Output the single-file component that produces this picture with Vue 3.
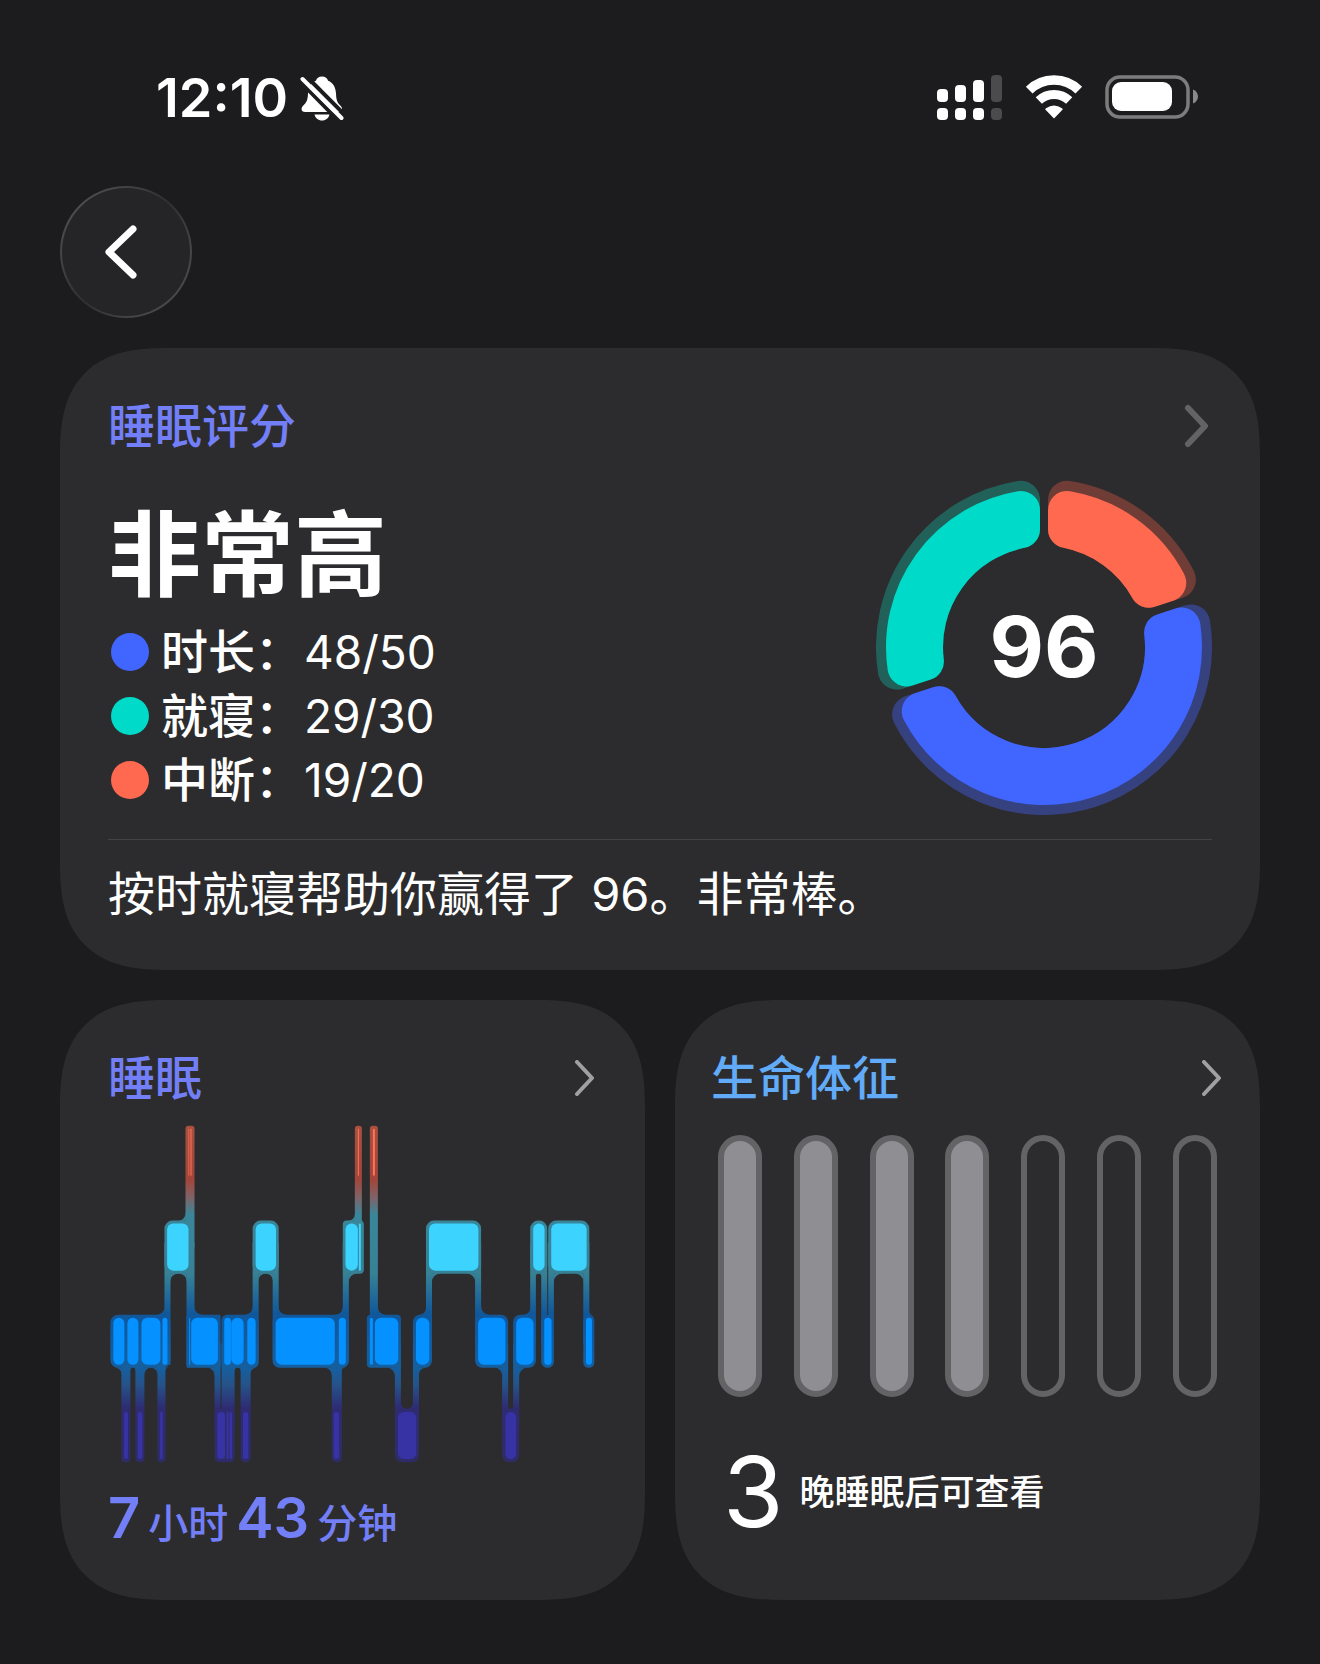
<script setup>
const scores = [
  { label: "时长：", value: "48/50", color: "#4166ff" },
  { label: "就寝：", value: "29/30", color: "#00dac8" },
  { label: "中断：", value: "19/20", color: "#ff694f" },
];

// angles in degrees, clockwise from the top
const segments = [
  { from: 0, to: 72, color: "#ff694f", dim: "#6f3c36" },
  { from: 72, to: 252, color: "#4166ff", dim: "#364280" },
  { from: 252, to: 360, color: "#00dac8", dim: "#22605a" },
];

const CORNER = 19;
const GAP = 4;

// The path is inset by CORNER, a round-joined stroke brings it back to full size.
const sector = (seg, inner, outer) => {
  const ri = inner + CORNER;
  const ro = outer - CORNER;
  const point = (r, angle, side) => {
    const a = (angle * Math.PI) / 180 + side * Math.asin((GAP + CORNER) / r);
    return `${(r * Math.sin(a)).toFixed(2)} ${(-r * Math.cos(a)).toFixed(2)}`;
  };
  const large = seg.to - seg.from > 190 ? 1 : 0;
  return [
    `M${point(ri, seg.from, 1)}`,
    `L${point(ro, seg.from, 1)}`,
    `A${ro} ${ro} 0 ${large} 1 ${point(ro, seg.to, -1)}`,
    `L${point(ri, seg.to, -1)}`,
    `A${ri} ${ri} 0 ${large} 0 ${point(ri, seg.from, 1)}Z`,
  ].join("");
};

// sleep stages: [x1, x2]
const stages = [
  { name: "awake", y: 58, color: "#ff7358", blocks: [[297, 299], [303, 306], [804, 807], [849, 855]] },
  {
    name: "rem",
    y: 342,
    color: "#3dd3ff",
    blocks: [[233, 297], [498, 559], [767, 804], [807, 813], [1017, 1165], [1329, 1363], [1383, 1489]],
  },
  {
    name: "core",
    y: 624,
    color: "#0591ff",
    blocks: [
      [72, 105], [114, 147], [156, 213], [219, 234], [299, 302], [305, 385], [404, 424], [425, 462],
      [473, 498], [558, 735], [747, 768], [840, 849], [855, 925], [978, 1018], [1164, 1246],
      [1278, 1330], [1362, 1384], [1487, 1505],
    ],
  },
  {
    name: "deep",
    y: 906,
    color: "#3833a5",
    blocks: [
      [104, 116], [145, 159], [212, 220], [383, 406], [411, 417], [420, 427], [460, 476], [732, 748],
      [924, 979], [1246, 1278],
    ],
  },
];

const radius = (block) => Math.min(18, (block[1] - block[0]) / 2);

// ribbon behind the blocks: [x1, y1, x2, y2, radius]
const ribbons = [
  // awake
  [288, 49, 315, 420, 9], [795, 49, 816, 420, 9], [840, 49, 864, 700, 9],
  // rem
  [225, 333, 310, 492, 24], [489, 333, 567, 492, 24], [759, 333, 822, 492, 12],
  [1008, 333, 1173, 492, 24], [1320, 333, 1371, 492, 24], [1374, 333, 1497, 492, 24],
  // core
  [63, 615, 243, 774, 24], [291, 615, 393, 774, 4], [396, 615, 507, 774, 16], [549, 615, 777, 774, 20],
  [831, 615, 933, 774, 12], [969, 615, 1026, 774, 22], [1155, 615, 1254, 774, 22],
  [1269, 615, 1337, 774, 22], [1353, 615, 1391, 774, 19], [1479, 615, 1512, 774, 16],
  // deep
  [96, 700, 123, 1057, 12], [138, 700, 165, 1057, 12], [204, 700, 228, 1057, 12],
  [375, 897, 435, 1057, 16], [453, 700, 483, 1057, 14], [726, 700, 756, 1057, 14],
  [915, 897, 987, 1057, 22], [1236, 897, 1287, 1057, 22],
  // links between two stages
  [225, 400, 243, 765, 0], [291, 400, 315, 765, 0], [489, 400, 507, 750, 0], [549, 400, 567, 750, 0],
  [759, 400, 777, 750, 0], [1008, 400, 1026, 700, 0], [1155, 400, 1173, 700, 0],
  [1320, 400, 1337, 700, 0], [1353, 400, 1371, 700, 0], [1374, 400, 1391, 700, 0],
  [1479, 400, 1497, 700, 0], [375, 700, 393, 950, 0], [396, 700, 435, 950, 0],
  [915, 700, 933, 950, 0], [969, 700, 987, 950, 0], [1236, 700, 1254, 950, 0], [1269, 700, 1287, 950, 0],
];

// inner corners of the ribbon: [x, y, dx, dy, radius]
const fillets = [
  [288, 333, -1, -1, 20], [795, 333, -1, -1, 18],
  [225, 615, -1, -1, 22], [315, 615, 1, -1, 22], [489, 615, -1, -1, 22], [567, 615, 1, -1, 22],
  [759, 615, -1, -1, 22], [864, 615, 1, -1, 22], [1008, 615, -1, -1, 20], [1173, 615, 1, -1, 24],
  [1320, 615, -1, -1, 20], [1497, 615, 1, -1, 10],
  [243, 492, 1, 1, 22], [291, 492, -1, 1, 22], [507, 492, 1, 1, 20], [549, 492, -1, 1, 20],
  [777, 492, 1, 1, 24], [1026, 492, 1, 1, 24], [1155, 492, -1, 1, 24], [1337, 492, 1, 1, 8],
  [1353, 492, -1, 1, 8], [1391, 492, 1, 1, 24], [1479, 492, -1, 1, 24],
  [96, 774, -1, 1, 18], [123, 774, 1, 1, 7], [138, 774, -1, 1, 7], [165, 774, 1, 1, 19],
  [204, 774, -1, 1, 19], [228, 774, 1, 1, 9], [375, 774, -1, 1, 22], [435, 774, 1, 1, 9],
  [453, 774, -1, 1, 9], [483, 774, 1, 1, 16], [726, 774, -1, 1, 22], [756, 774, 1, 1, 10],
  [915, 774, -1, 1, 24], [987, 774, 1, 1, 20], [1236, 774, -1, 1, 22], [1287, 774, 1, 1, 24],
  [933, 897, 1, -1, 18], [969, 897, -1, -1, 18], [1254, 897, 1, -1, 7], [1269, 897, -1, -1, 7],
];

const filletPath = ([x, y, dx, dy, r]) =>
  `M${x - dx} ${y - dy}L${x - dx} ${y + dy * r}L${x} ${y + dy * r}` +
  `A${r} ${r} 0 0 ${dx * dy > 0 ? 1 : 0} ${x + dx * r} ${y}L${x + dx * r} ${y - dy}Z`;

const nights = [true, true, true, true, false, false, false];
</script>

<template>
  <div class="screen">
    <div class="status-bar">
      <div class="status-left">
        <span class="time">12:10</span>
        <svg class="bell" width="44" height="48" viewBox="0 0 44 48" aria-hidden="true">
          <path
            d="M22 2.500c3.400 0 5.300 1.800 6.100 4.200 5 2 7.600 6.600 7.900 12.800.3 7 1.300 9 4.500 12.300 2.800 2.900 1.700 6.200-1.700 6.200H5c-3.400 0-4.700-3.300-1.900-6.200C6.500 28.500 7.700 26.500 8 19.500c.3-6.200 3-10.800 7.900-12.800.8-2.400 2.700-4.200 6.100-4.200z"
            fill="#fff"
          />
          <path d="M14.500 40.500h15c-.8 3.600-3.600 6-7.500 6s-6.700-2.400-7.500-6z" fill="#fff" />
          <path d="M5.500 1.500L45 41" stroke="#1c1c1e" stroke-width="4" />
          <path d="M-1 6.500L38 46" stroke="#1c1c1e" stroke-width="4" />
          <path d="M2.500 5L41.500 44" stroke="#fff" stroke-width="4" stroke-linecap="round" />
        </svg>
      </div>
      <div class="status-right">
        <svg width="66" height="46" viewBox="0 0 66 46" aria-hidden="true">
          <g fill="#fff">
            <rect x="0" y="14" width="11" height="13" rx="4" />
            <rect x="18" y="10" width="11" height="17" rx="4" />
            <rect x="36" y="5" width="11" height="22" rx="4" />
            <rect x="0" y="33" width="11" height="12" rx="4" />
            <rect x="18" y="33" width="11" height="12" rx="4" />
            <rect x="36" y="33" width="11" height="12" rx="4" />
          </g>
          <g fill="#4b4b4d">
            <rect x="54" y="0" width="11" height="27" rx="4" />
            <rect x="54" y="33" width="11" height="12" rx="4" />
          </g>
        </svg>
        <svg width="58" height="46" viewBox="0 0 58 46" aria-hidden="true">
          <path d="M4.200 15.200A35.500 35.500 0 0 1 53.800 15.200" fill="none" stroke="#fff" stroke-width="9.500" />
          <path d="M13.800 25.500A22 22 0 0 1 44.200 25.500" fill="none" stroke="#fff" stroke-width="9" />
          <path d="M29 43.500L20.300 34.600Q20 33.800 21 33.200Q29 27.800 37 33.200Q38 33.800 37.700 34.600Z" fill="#fff" />
        </svg>
        <svg width="94" height="46" viewBox="0 0 94 46" aria-hidden="true">
          <rect x="2" y="2" width="81" height="40" rx="13" fill="none" stroke="#7c7c7e" stroke-width="3.500" />
          <rect x="7" y="7" width="60" height="29" rx="9" fill="#fff" />
          <path d="M88 14.500c3 1 5 3.800 5 7s-2 6-5 7z" fill="#8a8a8c" />
        </svg>
      </div>
    </div>

    <button class="back" type="button" aria-label="返回">
      <svg width="34" height="56" viewBox="0 0 34 56" aria-hidden="true">
        <path d="M30 5L6 28L30 51" />
      </svg>
    </button>

    <main class="cards">
      <section class="card score">
        <header class="card-head">
          <h2 class="card-title">睡眠评分</h2>
          <svg class="chevron big" width="26" height="44" viewBox="0 0 26 44" aria-hidden="true">
            <path d="M4 4L21 22L4 40" />
          </svg>
        </header>
        <div class="score-body">
          <div>
            <p class="level">非常高</p>
            <ul class="score-list">
              <li v-for="item in scores" :key="item.label">
                <span class="dot" :style="{ backgroundColor: item.color }"></span>
                <span class="label">{{ item.label }}</span>
                <span class="value">{{ item.value }}</span>
              </li>
            </ul>
          </div>
          <div class="ring">
            <svg width="336" height="336" viewBox="-168 -168 336 336" aria-hidden="true">
              <g v-for="seg in segments" :key="seg.from" :stroke-width="CORNER * 2" stroke-linejoin="round">
                <path :d="sector(seg, 101, 168)" :fill="seg.dim" :stroke="seg.dim" />
                <path :d="sector(seg, 101, 158)" :fill="seg.color" :stroke="seg.color" />
              </g>
            </svg>
            <span class="ring-value">96</span>
          </div>
        </div>
        <p class="summary">按时就寝帮助你赢得了 96。非常棒。</p>
      </section>

      <section class="card sleep">
        <header class="card-head">
          <h2 class="card-title">睡眠</h2>
          <svg class="chevron" width="20" height="36" viewBox="0 0 20 36" aria-hidden="true">
            <path d="M2 2L17 18L2 34" />
          </svg>
        </header>
        <svg class="stages" viewBox="56 44 1458 1017" aria-hidden="true">
          <defs>
            <linearGradient id="ribbon" gradientUnits="userSpaceOnUse" x1="0" y1="49" x2="0" y2="1057">
              <stop offset="0" stop-color="#a9503f" />
              <stop offset="0.160" stop-color="#a3453a" />
              <stop offset="0.215" stop-color="#7d6469" />
              <stop offset="0.265" stop-color="#39869a" />
              <stop offset="0.440" stop-color="#378196" />
              <stop offset="0.560" stop-color="#10579b" />
              <stop offset="0.720" stop-color="#155f9f" />
              <stop offset="0.770" stop-color="#265288" />
              <stop offset="0.840" stop-color="#2e2b72" />
              <stop offset="1" stop-color="#2e2c68" />
            </linearGradient>
          </defs>
          <g fill="url(#ribbon)">
            <rect
              v-for="(r, i) in ribbons"
              :key="i"
              :x="r[0]"
              :y="r[1]"
              :width="r[2] - r[0]"
              :height="r[3] - r[1]"
              :rx="r[4]"
            />
            <path v-for="(f, i) in fillets" :key="i" :d="filletPath(f)" />
          </g>
          <g v-for="stage in stages" :key="stage.name" :fill="stage.color">
            <rect
              v-for="block in stage.blocks"
              :key="block[0]"
              :x="block[0]"
              :y="stage.y"
              :width="block[1] - block[0]"
              height="141"
              :rx="radius(block)"
            />
          </g>
        </svg>
        <p class="duration"><b>7</b><span>小时</span><b>43</b><span>分钟</span></p>
      </section>

      <section class="card vitals">
        <header class="card-head">
          <h2 class="card-title">生命体征</h2>
          <svg class="chevron" width="20" height="36" viewBox="0 0 20 36" aria-hidden="true">
            <path d="M2 2L17 18L2 34" />
          </svg>
        </header>
        <div class="nights">
          <span v-for="(done, i) in nights" :key="i" class="night" :class="{ done }"></span>
        </div>
        <p class="remaining"><b>3</b><span>晚睡眠后可查看</span></p>
      </section>
    </main>
  </div>
</template>

<style>
body {
  margin: 0;
  background-color: #1c1c1e;
}
</style>

<style scoped>
.screen {
  box-sizing: border-box;
  min-height: 100vh;
  padding: 70px 60px 64px;
  background-color: #1c1c1e;
  color: #fff;
  font-family: Inter, "Noto Sans CJK SC", sans-serif;
}

h2,
p,
ul {
  margin: 0;
  padding: 0;
  font-weight: 400;
}

.status-bar {
  display: flex;
  justify-content: space-between;
  align-items: center;
  height: 56px;
  padding: 0 61px 0 96px;
}
.status-left,
.status-right {
  display: flex;
  align-items: center;
}
.status-left {
  gap: 12px;
}
.status-right {
  gap: 22px;
}
.time {
  font-size: 54px;
  font-weight: 600;
  line-height: 56px;
}
.bell {
  overflow: hidden;
}

.back {
  display: flex;
  justify-content: center;
  align-items: center;
  width: 132px;
  height: 132px;
  margin: 60px 0 30px;
  padding: 0 12px 0 0;
  border: 2px solid transparent;
  border-radius: 50%;
  background:
    linear-gradient(#252527, #252527) padding-box,
    linear-gradient(130deg, #58585a, #3c3c3e 35%, #2f2f31 50%, #454547 75%, #4c4c4e) border-box;
  cursor: pointer;
}
.back path {
  fill: none;
  stroke: #fff;
  stroke-width: 7;
  stroke-linecap: round;
  stroke-linejoin: round;
}

.cards {
  display: grid;
  grid-template-columns: 1fr 1fr;
  gap: 30px;
}
.card {
  box-sizing: border-box;
  border-radius: 86px;
  background-color: #2c2c2e;
}
@supports (corner-shape: superellipse(1.4)) {
  .card {
    border-radius: 108px;
    corner-shape: superellipse(1.4);
  }
}
.card-head {
  display: flex;
  justify-content: space-between;
  align-items: center;
}
.card-title {
  color: #737ff7;
  font-size: 47px;
  font-weight: 500;
  line-height: 60px;
}
.chevron path {
  fill: none;
  stroke: #a0a0a2;
  stroke-width: 4;
  stroke-linecap: round;
  stroke-linejoin: round;
}
.chevron.big path {
  stroke: #636366;
  stroke-width: 6;
}

.score {
  grid-column: 1 / -1;
  padding: 48px 48px 44px;
}
.score .chevron {
  margin-right: 2px;
}
.score-body {
  display: flex;
  justify-content: space-between;
  padding: 23px 0 24px;
  border-bottom: 1px solid #434345;
}
.level {
  margin-top: 24px;
  font-size: 93px;
  font-weight: 700;
  line-height: 104px;
}
.score-list {
  margin-top: 13px;
  list-style: none;
}
.score-list li {
  display: flex;
  align-items: baseline;
  font-size: 47px;
  line-height: 64px;
}
.dot {
  align-self: center;
  width: 38px;
  height: 38px;
  margin: 0 12px 0 3px;
  border-radius: 50%;
}
.label {
  font-weight: 500;
}
.value {
  margin-left: 2px;
  font-size: 46px;
}
.ring {
  position: relative;
  height: 336px;
}
.ring-value {
  position: absolute;
  inset: 0;
  display: flex;
  justify-content: center;
  align-items: center;
  font-size: 84px;
  font-weight: 700;
  line-height: 84px;
}
.summary {
  padding-top: 22px;
  font-size: 47px;
  line-height: 64px;
}

.sleep {
  padding: 48px 50px 40px 48px;
}
.stages {
  display: block;
  width: 100%;
  margin-top: 16px;
}
.duration {
  display: flex;
  align-items: baseline;
  gap: 8px;
  margin-top: 18px;
  color: #737ff7;
  font-size: 40px;
  font-weight: 500;
  line-height: 72px;
}
.duration b {
  font-size: 56px;
  font-weight: 600;
}

.vitals {
  padding: 48px 38px 40px 36px;
}
.vitals .card-title {
  color: #62abf8;
}
.nights {
  display: flex;
  justify-content: space-between;
  margin: 27px 5px 0 7px;
}
.night {
  box-sizing: border-box;
  width: 44px;
  height: 262px;
  border: 6px solid #636366;
  border-radius: 22px;
}
.night.done {
  background-color: #8e8e93;
}
.remaining {
  display: flex;
  align-items: center;
  gap: 16px;
  margin: 45px 0 0 12px;
  font-size: 35px;
  font-weight: 500;
  line-height: 48px;
}
.remaining b {
  font-size: 98px;
  font-weight: 400;
  line-height: 100px;
}
</style>
